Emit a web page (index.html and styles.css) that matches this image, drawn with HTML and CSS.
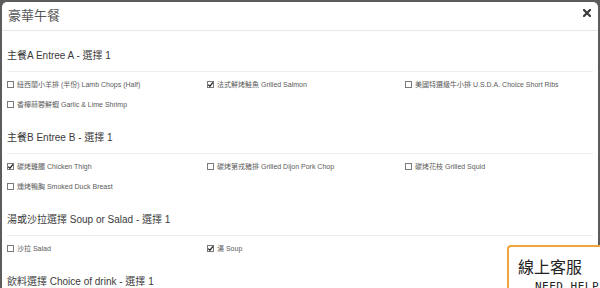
FILE: index.html
```html
<!DOCTYPE html>
<html lang="zh-Hant">
<head>
<meta charset="utf-8">
<title>豪華午餐</title>
<link rel="stylesheet" href="styles.css">
</head>
<body>
<div class="modal">
  <div class="modal-header">
    <h4 class="modal-title">豪華午餐</h4>
    <span class="close" aria-label="close">
      <svg width="8" height="8" viewBox="0 0 8 8"><path d="M1 1 L7 7 M7 1 L1 7" stroke="#3a3a3a" stroke-width="2.2" stroke-linecap="square"/></svg>
    </span>
  </div>
  <div class="modal-body">
    <div class="section">
      <div class="section-title">主餐A Entree A - 選擇 1</div>
      <div class="options">
        <label class="option"><span class="cb"></span>紐西蘭小羊排 (半份) Lamb Chops (Half)</label>
        <label class="option"><span class="cb checked"><svg width="7" height="7" viewBox="0 0 7 7"><path d="M1.2 3.6 L2.9 5.3 L5.9 1.4" fill="none" stroke="#222" stroke-width="1.3"/></svg></span>法式鮮烤鮭魚 Grilled Salmon</label>
        <label class="option"><span class="cb"></span>美國特選級牛小排 U.S.D.A. Choice Short Ribs</label>
        <label class="option"><span class="cb"></span>香檸蒜蓉鮮蝦 Garlic &amp; Lime Shrimp</label>
      </div>
    </div>
    <div class="section">
      <div class="section-title">主餐B Entree B - 選擇 1</div>
      <div class="options">
        <label class="option"><span class="cb checked"><svg width="7" height="7" viewBox="0 0 7 7"><path d="M1.2 3.6 L2.9 5.3 L5.9 1.4" fill="none" stroke="#222" stroke-width="1.3"/></svg></span>碳烤雞腿 Chicken Thigh</label>
        <label class="option"><span class="cb"></span>碳烤第戎豬排 Grilled Dijon Pork Chop</label>
        <label class="option"><span class="cb"></span>碳烤花枝 Grilled Squid</label>
        <label class="option"><span class="cb"></span>燻烤鴨胸 Smoked Duck Breast</label>
      </div>
    </div>
    <div class="section">
      <div class="section-title">湯或沙拉選擇 Soup or Salad - 選擇 1</div>
      <div class="options">
        <label class="option"><span class="cb"></span>沙拉 Salad</label>
        <label class="option"><span class="cb checked"><svg width="7" height="7" viewBox="0 0 7 7"><path d="M1.2 3.6 L2.9 5.3 L5.9 1.4" fill="none" stroke="#222" stroke-width="1.3"/></svg></span>湯 Soup</label>
      </div>
    </div>
    <div class="section">
      <div class="section-title">飲料選擇 Choice of drink - 選擇 1</div>
    </div>
  </div>
</div>
<div class="chat">
  <div class="chat-title">線上客服</div>
  <div class="chat-sub">NEED HELP</div>
</div>
</body>
</html>
```
FILE: styles.css
```css
html, body {
  margin: 0;
  padding: 0;
}
body {
  background: #5c5c5c;
  height: 288px;
  overflow: hidden;
  font-family: "Liberation Sans", Arial, "Noto Sans CJK TC", sans-serif;
}
.modal {
  margin: 2px 2px 0 2px;
  background: #fff;
  border-radius: 5px 5px 0 0;
  min-height: 300px;
}
.modal-header {
  box-sizing: border-box;
  height: 29px;
  border-bottom: 1px solid #e8e8e8;
  display: flex;
  justify-content: space-between;
  padding: 0 7px 0 6px;
}
.modal-title {
  margin: 0;
  font-size: 13px;
  font-weight: normal;
  line-height: 28px;
  color: #555;
}
.close {
  display: block;
  margin-top: 7px;
  width: 8px;
  height: 8px;
}
.close svg {
  display: block;
}
.modal-body {
  padding: 16px 5px 0 5px;
}
.section {
  margin-bottom: 15px;
}
.section-title {
  font-size: 10px;
  line-height: 18px;
  padding-bottom: 6px;
  border-bottom: 1px solid #eeeeee;
  color: #3a3a3a;
}
.options {
  display: grid;
  grid-template-columns: 200px 198px 1fr;
  grid-auto-rows: 20px;
  padding-top: 2px;
}
.option {
  display: flex;
  align-items: center;
  font-size: 7px;
  color: #5a5a5a;
  white-space: nowrap;
}
.cb {
  box-sizing: border-box;
  width: 7px;
  height: 7px;
  border: 1px solid #7a7a7a;
  margin-right: 3px;
  position: relative;
  flex: none;
}
.cb svg {
  position: absolute;
  left: -1px;
  top: -1px;
}
.chat {
  position: fixed;
  left: 507px;
  top: 245px;
  width: 120px;
  height: 70px;
  box-sizing: border-box;
  background: #fff;
  border: 2px solid #f0a73a;
  border-right: none;
  border-radius: 4px 0 0 0;
  padding: 9px 0 0 9px;
}
.chat-title {
  font-family: "Noto Sans CJK TC", sans-serif;
  font-size: 16px;
  line-height: 20px;
  color: #222;
}
.chat-sub {
  font-family: "DejaVu Sans Mono", monospace;
  font-size: 11px;
  line-height: 14px;
  color: #222;
  margin: 4px 0 0 17px;
  letter-spacing: 0.5px;
}
```
